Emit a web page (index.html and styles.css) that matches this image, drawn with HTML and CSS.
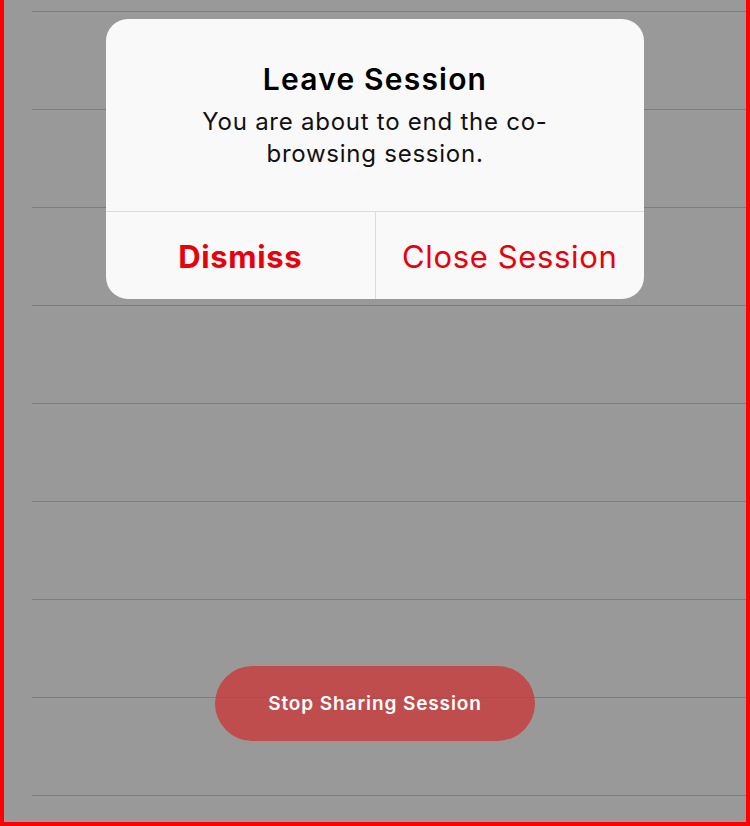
FILE: index.html
```html
<!DOCTYPE html>
<html>
<head>
<meta charset="utf-8">
<link rel="stylesheet" href="styles.css">
</head>
<body>
<div class="screen">
  <div class="rows">
    <div class="row"></div><div class="row"></div><div class="row"></div>
    <div class="row"></div><div class="row"></div><div class="row"></div>
    <div class="row"></div><div class="row"></div><div class="row"></div>
  </div>
  <div class="alert">
    <div class="alert-body">
      <div class="alert-title">Leave Session</div>
      <div class="alert-msg">You are about to end the co-<br>browsing session.</div>
    </div>
    <div class="alert-actions">
      <div class="action action-bold">Dismiss</div>
      <div class="action">Close Session</div>
    </div>
  </div>
  <div class="stop-btn">Stop Sharing Session</div>
  <div class="home-dot"></div>
</div>
</body>
</html>
```
FILE: styles.css
```css
html, body {
  margin: 0;
  padding: 0;
}
body {
  width: 750px;
  height: 826px;
  overflow: hidden;
  font-family: Inter, "Noto Sans", sans-serif;
}
.screen {
  position: relative;
  width: 750px;
  height: 826px;
  box-sizing: border-box;
  background: #999999;
  border-left: 4px solid #ff0000;
  border-right: 4px solid #ff0000;
  border-bottom: 4px solid #ff0000;
  overflow: hidden;
}
.rows {
  padding-top: 11px;
  padding-left: 28px;
}
.row {
  height: 97px;
  border-top: 1px solid #7d7d7d;
}
.alert {
  position: absolute;
  left: 102px;
  top: 19px;
  width: 538px;
  height: 280px;
  background: #f9f9f9;
  border-radius: 22px;
  display: flex;
  flex-direction: column;
  overflow: hidden;
}
.alert-body {
  height: 193px;
  box-sizing: border-box;
  padding-top: 43px;
  text-align: center;
  border-bottom: 1px solid #dcdcdc;
}
.alert-title {
  font-size: 30px;
  font-weight: 600;
  letter-spacing: 1.2px;
  color: #000;
  line-height: 34px;
  margin-bottom: 10px;
}
.alert-msg {
  font-size: 24px;
  line-height: 32px;
  letter-spacing: 0.75px;
  color: #111;
}
.alert-actions {
  flex: 1;
  display: flex;
}
.action {
  flex: 1;
  display: flex;
  align-items: center;
  justify-content: center;
  color: #e8000b;
  font-size: 31px;
  letter-spacing: 0.65px;
  padding-top: 1px;
}
.action + .action {
  border-left: 1px solid #dcdcdc;
}
.action-bold {
  font-weight: 700;
  letter-spacing: 0.6px;
}
.stop-btn {
  position: absolute;
  left: 211px;
  top: 666px;
  width: 320px;
  height: 75px;
  border-radius: 38px;
  background: rgba(200, 60, 60, 0.82);
  color: #fff;
  font-size: 19px;
  font-weight: 600;
  letter-spacing: 0.9px;
  display: flex;
  align-items: center;
  justify-content: center;
}
.home-dot {
  position: absolute;
  left: 26px;
  top: 822px;
  width: 18px;
  height: 10px;
  border-radius: 9px;
  background: rgba(255, 255, 255, 0.5);
}
```
